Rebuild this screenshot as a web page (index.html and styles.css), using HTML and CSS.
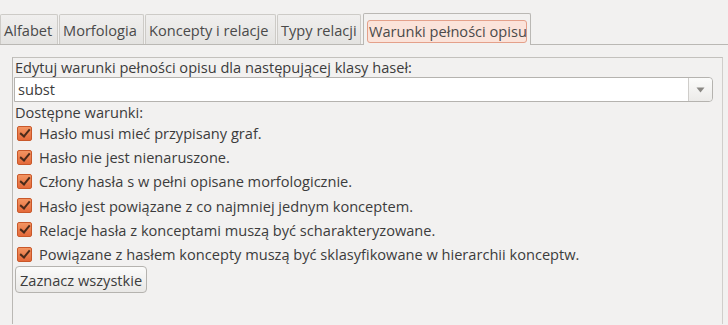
FILE: index.html
```html
<!DOCTYPE html>
<html lang="pl">
<head>
    <meta charset="UTF-8">
    <title>Warunki pełności opisu</title>
    <link rel="stylesheet" href="styles.css">
</head>
<body>
    <div class="tabs">
        <div class="tab tab-alfabet">Alfabet</div>
        <div class="tab tab-morf">Morfologia</div>
        <div class="tab tab-koncepty">Koncepty i relacje</div>
        <div class="tab tab-typy">Typy relacji</div>
        <div class="tab active"><span class="focus">Warunki pełności opisu</span></div>
    </div>

    <div class="page">
        <div class="label">Edytuj warunki pełności opisu dla następującej klasy haseł:</div>
        <div class="combo">
            <span class="combo-value">subst</span>
            <span class="combo-button">
                <svg width="9" height="6" viewBox="0 0 9 6"><path d="M0.5 0.5 H8.5 L4.5 5.5 Z" fill="#8a8884"/></svg>
            </span>
        </div>
        <div class="label">Dostępne warunki:</div>
        <ul class="conditions">
            <li><span class="check"></span>Hasło musi mieć przypisany graf.</li>
            <li><span class="check"></span>Hasło nie jest nienaruszone.</li>
            <li><span class="check"></span>Człony hasła s w pełni opisane morfologicznie.</li>
            <li><span class="check"></span>Hasło jest powiązane z co najmniej jednym konceptem.</li>
            <li><span class="check"></span>Relacje hasła z konceptami muszą być scharakteryzowane.</li>
            <li><span class="check"></span>Powiązane z hasłem koncepty muszą być sklasyfikowane w hierarchii konceptw.</li>
        </ul>
        <button class="select-all">Zaznacz wszystkie</button>
    </div>
</body>
</html>
```

FILE: styles.css
```css
body {
    margin: 0;
    padding: 0;
    background-color: #f2f1f0;
    color: #3c3c3c;
    font-family: 'Open Sans', 'DejaVu Sans', sans-serif;
    font-size: 14.6px;
    overflow: hidden;
    height: 325px;
}

/* Notebook tabs */
.tabs {
    display: flex;
    align-items: flex-end;
    height: 45px;
    border-bottom: 1px solid #bab8b4;
    box-sizing: border-box;
}
.tab {
    box-sizing: border-box;
    height: 30px;
    margin-right: 1px;
    padding: 0 3px;
    line-height: 30px;
    border: 1px solid #cdcbc7;
    border-bottom: none;
    border-radius: 2px 2px 0 0;
    background: linear-gradient(#f0efee, #e4e3e1);
    color: #4a4a4a;
    white-space: nowrap;
}
.tab-alfabet { width: 58px; }
.tab-morf { width: 85px; }
.tab-koncepty { width: 131px; }
.tab-typy { width: 84px; }
.tab.active {
    width: 168px;
    height: 32px;
    margin-left: 1px;
    margin-bottom: -1px;
    padding: 6px 3px 0;
    line-height: 20px;
    background: #f2f1f0;
    border-color: #bab8b4;
}
.focus {
    display: block;
    height: 23px;
    line-height: 21px;
    padding: 0 1px;
    box-sizing: border-box;
    border: 1px solid #e4a08a;
    border-radius: 3px;
    background-color: #fbe3da;
}

/* Page frame */
.page {
    box-sizing: border-box;
    margin: 12px 5px 0 12px;
    height: 267px;
    border-top: 1px solid #c3c1bd;
    border-left: 1px solid #bab8b4;
    border-right: 1px solid #d0cecb;
    padding: 0 0 0 1px;
}
.label {
    height: 18px;
    line-height: 18px;
    padding-left: 1px;
}

.combo {
    display: flex;
    margin: 1px 9px 1px 0;
    height: 25px;
    box-sizing: border-box;
    border: 1px solid #b5b3af;
    border-radius: 0 4px 4px 0;
    background-color: #fff;
}
.combo-value {
    flex: 1;
    line-height: 23px;
    padding-left: 3px;
}
.combo-button {
    width: 23px;
    display: flex;
    align-items: center;
    justify-content: center;
    border-left: 1px solid #cfcdca;
    background: linear-gradient(#fbfbfa, #ecebe9);
    border-radius: 0 4px 4px 0;
}

.conditions {
    list-style: none;
    margin: 0;
    padding: 0 0 0 3px;
}
.conditions li {
    display: flex;
    align-items: center;
    height: 24.2px;
}
.check {
    position: relative;
    flex: none;
    width: 13px;
    height: 13px;
    margin-right: 7px;
    border: 1px solid #c9582a;
    border-radius: 2px;
    background: linear-gradient(#f39562, #e4693a);
}
.check::after {
    content: "";
    position: absolute;
    left: 4px;
    top: 0px;
    width: 4px;
    height: 8px;
    border: solid #4a2a1a;
    border-width: 0 2px 2px 0;
    transform: rotate(40deg);
}

.select-all {
    margin: 0 0 0 1px;
    height: 27px;
    padding: 0 4px;
    font-family: inherit;
    font-size: 14.6px;
    color: #3c3c3c;
    border: 1px solid #b5b3af;
    border-radius: 4px;
    background: linear-gradient(#fbfbfa, #e9e8e6);
}
```
